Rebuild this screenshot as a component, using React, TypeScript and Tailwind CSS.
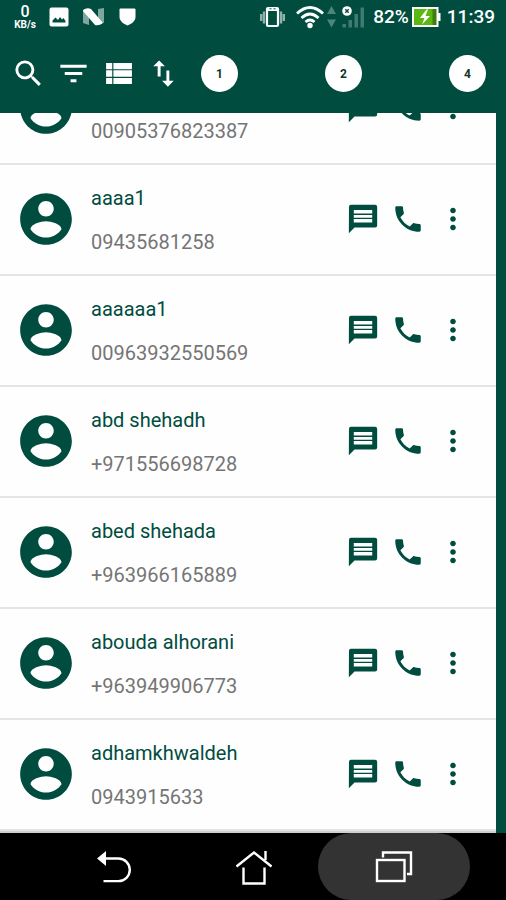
import React from 'react'
import { MdFilterList, MdMoreVert, MdSearch, MdSwapVert } from 'react-icons/md'

interface Contact {
  id: number
  name: string
  phone: string
}

interface IconProps {
  className?: string
}

const contacts: Contact[] = [
  { id: 1, name: '', phone: '00905376823387' },
  { id: 2, name: 'aaaa1', phone: '09435681258' },
  { id: 3, name: 'aaaaaa1', phone: '00963932550569' },
  { id: 4, name: 'abd shehadh', phone: '+971556698728' },
  { id: 5, name: 'abed shehada', phone: '+963966165889' },
  { id: 6, name: 'abouda alhorani', phone: '+963949906773' },
  { id: 7, name: 'adhamkhwaldeh', phone: '0943915633' },
]

const tools = [
  { label: 'Search', Icon: MdSearch },
  { label: 'Filter', Icon: MdFilterList },
  { label: 'List view', Icon: ListIcon },
  { label: 'Sort', Icon: MdSwapVert },
]

const actions = [
  { label: 'Message', Icon: MessageIcon },
  { label: 'Call', Icon: CallIcon },
  { label: 'More', Icon: MdMoreVert },
]

const tabs = [1, 2, 4]

export default function App() {
  return (
    <div className="flex h-screen flex-col bg-[#004d40] font-['Roboto',sans-serif]">
      <header className="shrink-0 text-white">
        <StatusBar />
        <Toolbar />
      </header>
      {/* list sits scrolled to its end, the first row runs under the toolbar */}
      <main className="mr-[10px] flex min-h-0 flex-1 flex-col justify-end overflow-hidden bg-[#fefefe]">
        <ul className="border-b-2 border-[#cfcfcf]">
          {contacts.map((contact) => (
            <ContactRow key={contact.id} contact={contact} />
          ))}
        </ul>
      </main>
      <NavBar />
    </div>
  )
}

function StatusBar() {
  return (
    <div className="flex h-[34px] items-center justify-between pl-[13px] pr-[11px]">
      <div className="flex items-center">
        <div className="flex w-6 flex-col items-center gap-px pt-px">
          <span className="text-base font-medium leading-[14px]">0</span>
          <span className="text-[10px] font-bold leading-[10px]">KB/s</span>
        </div>
        {/* screenshot saved */}
        <svg className="ml-3 h-5 w-5" viewBox="0 0 20 20">
          <rect x="0.5" y="0.5" width="19" height="19" rx="2" fill="#fff" />
          <path d="M3.500 15.500v-2l3-3 2.500 2.500 2-3 2 2.500 1.500-1.500 2 3v1.500z" fill="#004d40" />
        </svg>
        <svg className="ml-[14px] h-[18px] w-[21px]" viewBox="0 0 21 18">
          <path d="M0 3l6 2v12l-6-2z" fill="#7fa69f" />
          <path d="M15 1l6-1v15l-6-1z" fill="#7fa69f" />
          <path d="M0 2q4-3 8-1l12 14q-4 3-8 2L0 3z" fill="#fff" />
        </svg>
        <svg className="ml-[15px] h-[18px] w-[17px]" viewBox="0 0 17 18">
          <path d="M0.5 1.500Q0.500 0.500 1.500 0.500h14q1 0 1 1V9c0 4-4 7-8 8.500C4.500 16 0.500 13 0.500 9z" fill="#fff" />
        </svg>
      </div>
      <div className="flex items-center">
        {/* vibrate */}
        <svg className="h-[22px] w-[25px]" viewBox="0 0 25 22">
          <path d="M1.200 8v7M4 5.500v12M23.800 8v7M21 5.500v12" stroke="#8fb3ac" strokeWidth="2.400" />
          <rect x="7" y="2" width="11" height="18" rx="1" fill="none" stroke="#fff" strokeWidth="2.200" />
          <path d="M7 3.500h11" stroke="#fff" strokeWidth="3" />
          <path d="M9.500 2.800h2M13.500 2.800h2" stroke="#004d40" />
        </svg>
        <svg className="ml-[11px] h-6 w-7" viewBox="0 0 28 24" fill="none" stroke="#fff" strokeWidth="2.800">
          <path d="M1 8.500q13-12 26 0M5.500 13q8.500-8 17 0M9.500 17q4.500-4 9 0" />
          <circle cx="14" cy="20.500" r="2.700" fill="#fff" stroke="none" />
        </svg>
        <svg className="ml-[3px] h-[22px] w-[9px]" viewBox="0 0 9 22" fill="#4d857b">
          <path d="M4.500 0L9 8H0zM4.500 21.500L0 13.500h9z" />
        </svg>
        <svg className="ml-[6px] h-6 w-[23px]" viewBox="0 0 23 24">
          <path d="M0.500 19h3.500v3.500h-3.500zM6.500 15h3.500v7.500h-3.500zM12.500 9h3.500v13.500h-3.500zM18.500 2.500h3.500v20h-3.500z" fill="#3f7a70" />
          <circle cx="5" cy="6" r="4.800" fill="#fff" />
          <path d="M3.300 4.300l3.400 3.400M6.700 4.300l-3.400 3.400" stroke="#004d40" strokeWidth="1.400" />
        </svg>
        <span className="ml-2 text-[19px] font-medium leading-6">82%</span>
        <svg className="ml-[3px] h-5 w-[29px]" viewBox="0 0 29 20">
          <rect x="1" y="1" width="24.500" height="18" fill="#3f7d10" stroke="#fff" strokeWidth="2" />
          <path d="M2 2h18.500v16H2z" fill="#5cb811" />
          <path d="M26 6h2.500v8H26z" fill="#fff" />
          <path d="M14.500 2.500L8 11h4.500l-2.500 6.500L18 9h-4.500l2.500-6.500z" fill="#fff" />
        </svg>
        <span className="ml-[6px] text-[19px] font-medium leading-6">11:39</span>
      </div>
    </div>
  )
}

function Toolbar() {
  return (
    <div className="flex h-[79px] items-center pl-[6px] pr-5">
      <div className="flex shrink-0">
        {tools.map(({ label, Icon }) => (
          <button key={label} type="button" aria-label={label} className="flex w-[45px] justify-center">
            <Icon className="h-[35px] w-[35px]" />
          </button>
        ))}
      </div>
      <div className="flex flex-1 justify-between pl-[15px]">
        {tabs.map((tab) => (
          <button
            key={tab}
            type="button"
            className="h-[37px] w-[37px] rounded-full bg-white text-xs font-bold text-[#12332c]"
          >
            {tab}
          </button>
        ))}
      </div>
    </div>
  )
}

function ContactRow({ contact }: { contact: Contact }) {
  return (
    <li className="flex h-[111px] items-center border-b-2 border-[#e4e4e4] pb-px pl-[15px] pr-[21px] text-[#004d40]">
      <svg className="h-[62px] w-[62px] shrink-0" viewBox="0 0 24 24" fill="currentColor">
        <path d="M12 2C6.480 2 2 6.480 2 12s4.480 10 10 10 10-4.480 10-10S17.520 2 12 2zm0 3c1.660 0 3 1.340 3 3s-1.340 3-3 3-3-1.340-3-3 1.340-3 3-3zm0 14.200c-2.500 0-4.710-1.280-6-3.220.03-1.990 4-3.080 6-3.080 1.990 0 5.970 1.090 6 3.080-1.290 1.940-3.500 3.220-6 3.220z" />
      </svg>
      <div className="min-w-0 flex-1 pl-[14px] pt-[2px] text-xl leading-[44px]">
        <p className="h-[44px] truncate">{contact.name}</p>
        <p className="truncate text-[#757575]">{contact.phone}</p>
      </div>
      <div className="flex shrink-0">
        {actions.map(({ label, Icon }) => (
          <button key={label} type="button" aria-label={label} className="flex w-[45px] justify-center">
            <Icon className="h-[34px] w-[34px]" />
          </button>
        ))}
      </div>
    </li>
  )
}

function ListIcon({ className }: IconProps) {
  return (
    <svg className={className} viewBox="0 0 24 24" fill="currentColor">
      <path d="M3.500 14.200h4.200v-4.400H3.500v4.400zm0 5h4.200v-4.200H3.500v4.200zM3.500 9h4.200V4.800H3.500V9zm5 5.200h12.700v-4.400H8.500v4.400zm0 5h12.700v-4.200H8.500v4.200zM8.500 4.800V9h12.700V4.800H8.500z" />
    </svg>
  )
}

function MessageIcon({ className }: IconProps) {
  return (
    <svg className={className} viewBox="0 0 24 24" fill="currentColor">
      <path d="M20.500 2H3.500Q2.100 2 2.100 3.500L2 22l4-4h14.500q1.500 0 1.500-1.500v-13Q22 2 20.500 2z" />
      <path d="M5.500 5.700h13v2.500h-13zM5.500 9.100h13v2h-13zM5.500 12h13v2.500h-13z" fill="#fefefe" />
    </svg>
  )
}

function CallIcon({ className }: IconProps) {
  return (
    <svg className={className} viewBox="0 0 24 24" fill="currentColor">
      <path d="M6.620 10.790c1.440 2.830 3.760 5.140 6.590 6.590l2.200-2.200c.27-.27.67-.36 1.020-.24 1.120.37 2.330.57 3.570.57.55 0 1 .45 1 1V20c0 .55-.45 1-1 1-9.390 0-17-7.610-17-17 0-.55.45-1 1-1h3.500c.55 0 1 .45 1 1 0 1.250.2 2.450.57 3.570.11.35.03.74-.25 1.020l-2.200 2.200z" />
    </svg>
  )
}

function NavBar() {
  return (
    <nav className="flex h-[67px] shrink-0 justify-center bg-black pl-[2px]">
      <button type="button" aria-label="Back" className="flex w-[152px] items-center justify-center">
        <svg className="h-9 w-9" viewBox="0 0 36 36" fill="none">
          <path d="M9 9.500h13.500a11.300 11.300 0 0 1 0 22.600H7.500" stroke="#fff" strokeWidth="2.400" />
          <path d="M1 9.500L10 2v15z" fill="#fff" />
        </svg>
      </button>
      <button type="button" aria-label="Home" className="flex w-32 items-center justify-center">
        <svg className="h-9 w-9" viewBox="0 0 36 36" fill="none" stroke="#fff" strokeWidth="2.400">
          <path d="M0.500 17.500L18 3.500l17.500 14M29.500 11V2" />
          <path d="M7.500 18.500v16h21v-16" />
        </svg>
      </button>
      <button
        type="button"
        aria-label="Recent apps"
        className="flex w-[152px] items-center justify-center rounded-full bg-[#333333]"
      >
        <svg className="h-8 w-[38px]" viewBox="0 0 38 32" fill="none" stroke="#fff" strokeWidth="2.400">
          <rect x="2" y="9" width="27.500" height="21" />
          <path d="M8 6.500V1.500h28V23h-4" />
        </svg>
      </button>
    </nav>
  )
}
